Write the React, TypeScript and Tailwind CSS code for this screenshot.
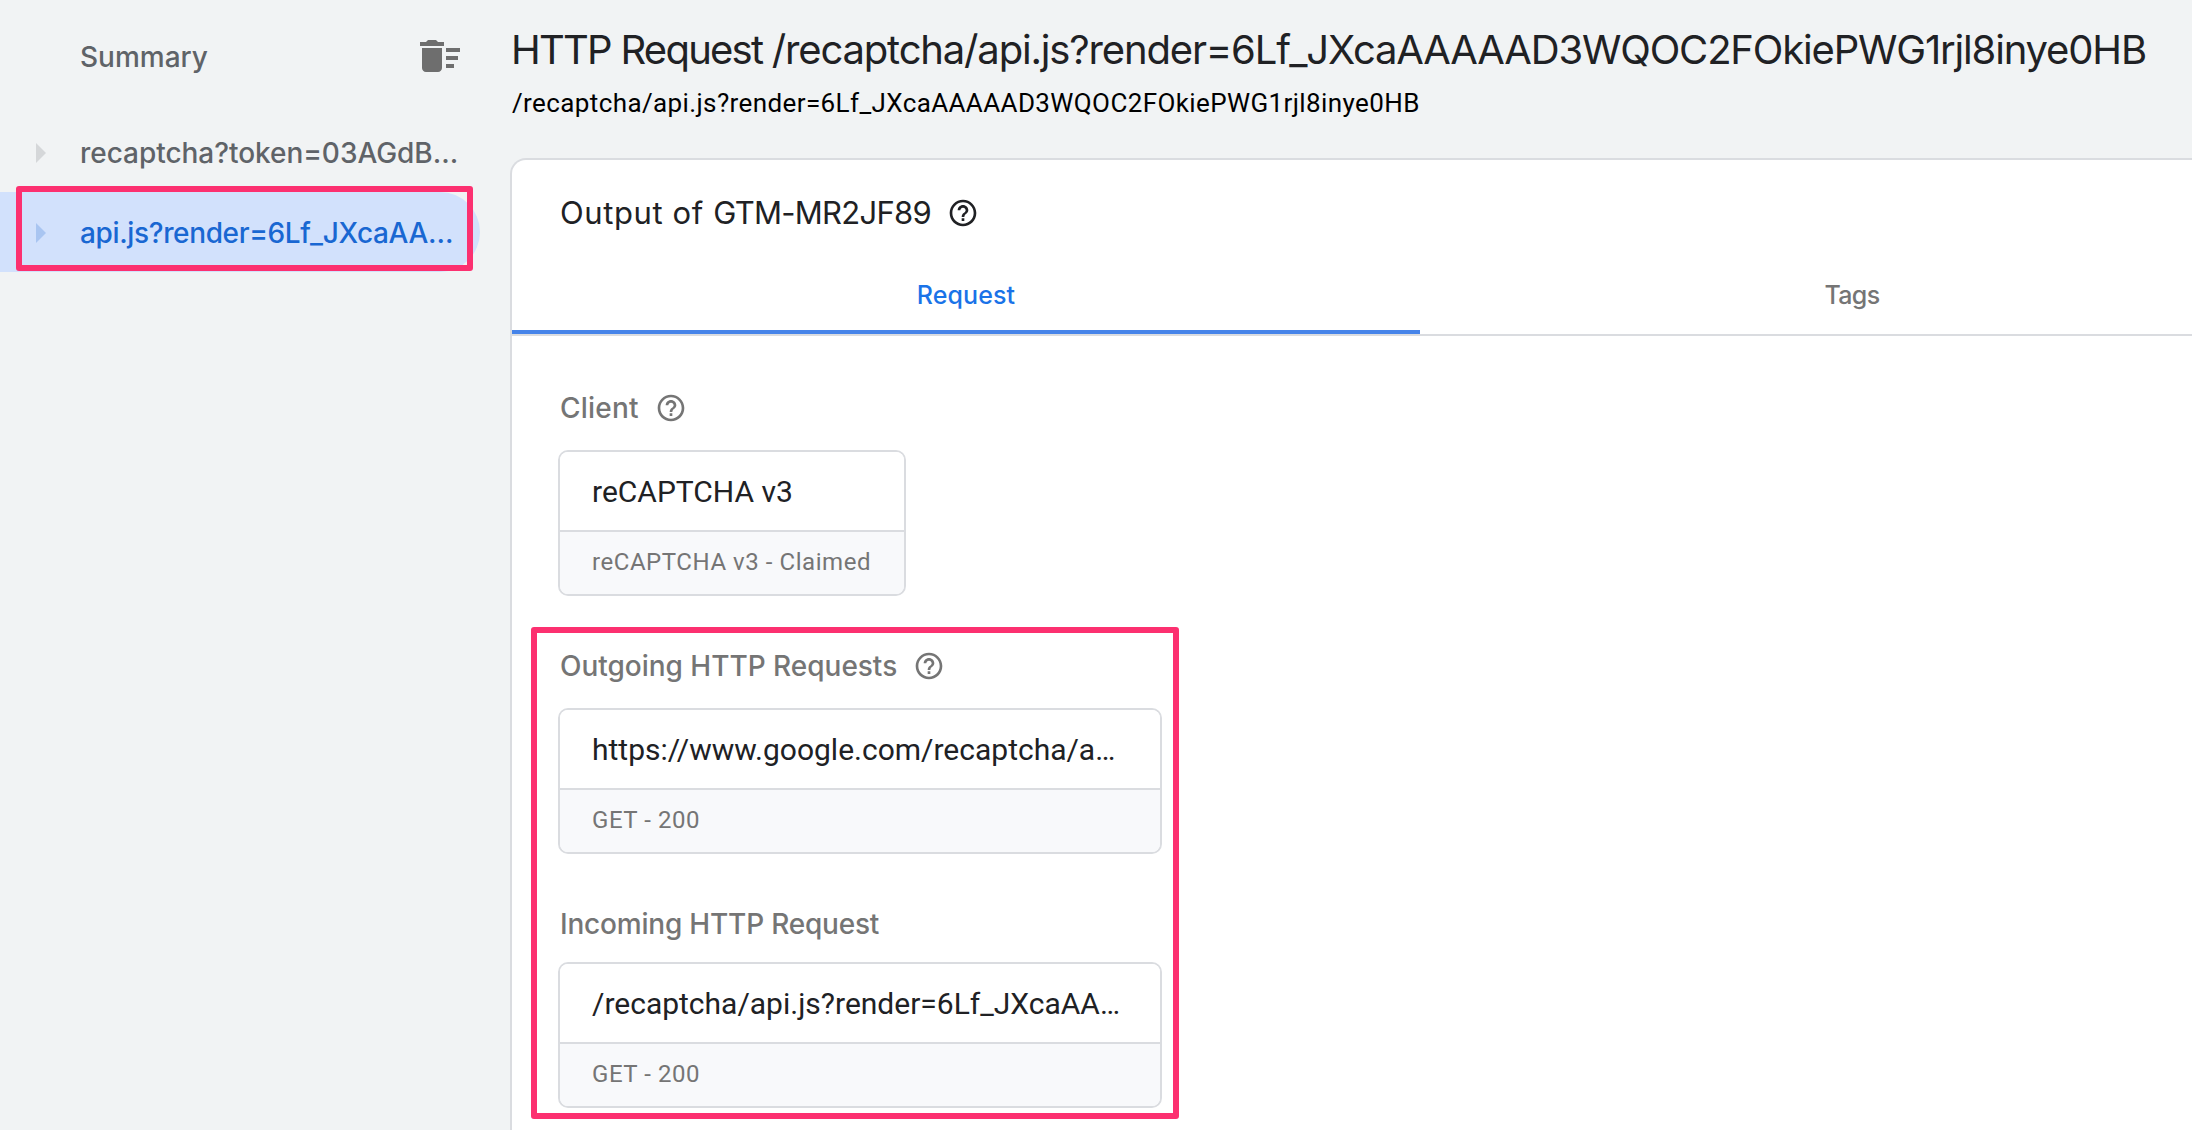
import type { ReactNode } from 'react';

const SANS = "font-['Inter',sans-serif]";
const ROBOTO = "font-['Roboto',sans-serif]";

function HelpIcon() {
  return (
    <svg viewBox="0 0 24 24" className="size-8 shrink-0" fill="currentColor" aria-hidden="true">
      <path d="M11 18h2v-2h-2v2zm1-16C6.48 2 2 6.48 2 12s4.48 10 10 10 10-4.48 10-10S17.52 2 12 2zm0 18c-4.41 0-8-3.59-8-8s3.59-8 8-8 8 3.59 8 8-3.59 8-8 8zm0-14c-2.21 0-4 1.79-4 4h2c0-1.1.9-2 2-2s2 .9 2 2c0 2-3 1.75-3 5h2c0-2.25 3-2.5 3-5 0-2.21-1.79-4-4-4z" />
    </svg>
  );
}

function DeleteSweepIcon() {
  return (
    <svg viewBox="0 0 24 24" className="size-12 shrink-0 text-[#6e6e6e]" fill="currentColor" aria-hidden="true">
      <path d="M15 16h4v2h-4zm0-8h7v2h-7zm0 4h6v2h-6zM3 18c0 1.1.9 2 2 2h6c1.1 0 2-.9 2-2V8H3v10zM14 5h-3l-1-1H6L5 5H2v2h12z" />
    </svg>
  );
}

function Arrow({ className }: { className: string }) {
  return (
    <svg viewBox="0 0 10 20" className={`h-5 w-2.5 shrink-0 ${className}`} fill="currentColor" aria-hidden="true">
      <path d="M0 0l10 10L0 20z" />
    </svg>
  );
}

function Sidebar() {
  return (
    <aside className={`w-[510px] shrink-0 text-[28px] font-medium text-[#5f6368] ${SANS}`}>
      <div className="flex h-28 items-center justify-between pr-[46px] pl-20">
        <span className="pt-0.5">Summary</span>
        <DeleteSweepIcon />
      </div>
      <div className="flex h-20 w-[480px] items-center pl-9 whitespace-nowrap">
        <Arrow className="mt-0.5 text-[#d5d7d9]" />
        <span className="pt-0.5 pl-[34px] tracking-[-0.04px]">recaptcha?token=03AGdB…</span>
      </div>
      <div className="relative flex h-20 w-[480px] items-center rounded-r-full bg-[#d2e1fc] pl-9 whitespace-nowrap text-[#1967d2]">
        <Arrow className="mt-0.5 text-[#a9c5f1]" />
        <span className="pt-0.5 pl-[34px] tracking-[-0.36px]">api.js?render=6Lf_JXcaAA…</span>
        <div className="absolute top-[-6px] left-4 h-[85px] w-[457px] rounded-[3px] border-6 border-[#fc3070]" />
      </div>
    </aside>
  );
}

function Label({ children, help, className }: { children: ReactNode; help?: boolean; className: string }) {
  return (
    <div className={`flex h-8 items-center gap-4 text-[28px] leading-8 font-medium whitespace-nowrap text-[#757575] ${SANS}`}>
      <span className={className}>{children}</span>
      {help && <HelpIcon />}
    </div>
  );
}

function Chip({ title, detail, className }: { title: string; detail: string; className: string }) {
  return (
    <div className={`-ml-0.5 overflow-hidden rounded-[10px] border-2 border-[#dadce0] whitespace-nowrap ${ROBOTO} ${className}`}>
      <div className="flex h-20 items-center border-b-2 border-[#dadce0] bg-white pl-8 text-[30px] text-[#202124]">{title}</div>
      <div className="flex h-[62px] items-center bg-[#f8f9fb] pb-0.5 pl-8 text-2xl tracking-[0.55px] text-[#757575]">{detail}</div>
    </div>
  );
}

export default function App() {
  return (
    <div className="flex h-[1130px] w-[2192px] overflow-hidden bg-[#f1f3f4]">
      <Sidebar />
      <main className="flex min-w-0 flex-1 flex-col pt-[26px]">
        <h1 className={`pl-px text-[40px] leading-[48px] tracking-[-1.17px] whitespace-nowrap text-[#202124] ${SANS}`}>
          <span className="tracking-[-1.75px]">HTTP Request </span>
          /recaptcha/api.js?render=6Lf_JXcaAAAAAD3WQOC2FOkiePWG1rjl8inye0HB
        </h1>
        <p className={`pt-4 pl-0.5 text-[26px] leading-[26px] tracking-[0.39px] whitespace-nowrap text-black ${ROBOTO}`}>
          /recaptcha/api.js?render=6Lf_JXcaAAAAAD3WQOC2FOkiePWG1rjl8inye0HB
        </p>
        <section className="mt-[42px] flex-1 overflow-hidden rounded-tl-2xl border-t-2 border-l-2 border-[#dadce0] bg-white">
          <div className={`flex h-24 items-center gap-4 pt-[10px] pl-12 text-[31px] whitespace-nowrap text-[#202124] ${SANS}`}>
            <span className="pt-px tracking-[-0.72px]">
              <span className="tracking-[0.6px]">Output of </span>
              GTM-MR2JF89
            </span>
            <HelpIcon />
          </div>
          <div className={`flex h-20 w-[1772px] border-b-2 border-[#dadce0] text-[25px] font-medium ${SANS}`}>
            <div className="flex w-[908px] items-center justify-center border-b-4 border-[#4684e9] pt-[5px] tracking-[0.1px] text-[#1a73e8]">Request</div>
            <div className="flex w-[864px] items-center justify-center pt-px tracking-[-0.6px] text-[#757575]">Tags</div>
          </div>
          <div className="flex flex-col items-start pt-14 pl-12">
            <Label help className="tracking-[0.2px]">Client</Label>
            <Chip className="mt-[26px] w-[348px]" title="reCAPTCHA v3" detail="reCAPTCHA v3 - Claimed" />
            <div className="relative mt-[54px]">
              <Label help className="tracking-[-0.02px]">Outgoing HTTP Requests</Label>
              <Chip className="mt-[26px] w-[604px]" title="https://www.google.com/recaptcha/a…" detail="GET - 200" />
              <div className="pt-[54px]">
                <Label className="tracking-[-0.2px]">Incoming HTTP Request</Label>
              </div>
              <Chip className="mt-[22px] w-[604px]" title="/recaptcha/api.js?render=6Lf_JXcaAA…" detail="GET - 200" />
              <div className="absolute top-[-23px] left-[-29px] h-[492px] w-[648px] rounded-[3px] border-6 border-[#fc3070]" />
            </div>
          </div>
        </section>
      </main>
    </div>
  );
}
